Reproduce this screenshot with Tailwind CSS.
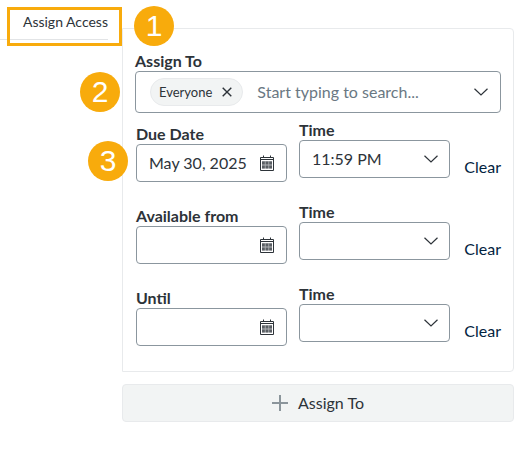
<!DOCTYPE html>
<html lang="en">
<head>
  <meta charset="UTF-8" />
  <meta name="viewport" content="width=device-width, initial-scale=1.0"/>
  <title>Assign Access</title>
  <script src="https://cdn.jsdelivr.net/npm/@tailwindcss/browser@4"></script>
</head>
<body class="relative bg-white font-[Lato,sans-serif] text-base leading-5 text-[#2d3339]">

  <!-- Shared icons -->
  <svg class="hidden">
    <symbol id="chevron" viewBox="0 0 14 8">
      <path d="M0.5 0.7 L7 7 L13.5 0.7" fill="none" stroke="#2d3339" stroke-width="1.2"/>
    </symbol>
    <symbol id="calendar" viewBox="0 0 14 16">
      <path d="M0.5 2.5H13.5V15.5H0.5Z M0.5 4.5H13.5" fill="none" stroke="#2d3339"/>
      <path d="M3.5 0.5V3 M10.5 0.5V3" stroke="#2d3339"/>
      <path d="M2 6H12V13.5H2Z" fill="#b4b7ba"/>
      <path d="M2 6.5h2.8v3H2z M5.6 6.5h2.8v3H5.6z M9.2 6.5H12v3H9.2z M2 10.5h2.8v3H2z M5.6 10.5h2.8v3H5.6z M9.2 10.5H12v3H9.2z" fill="#5a5f64"/>
    </symbol>
  </svg>

  <div class="flex items-start">
    <div class="w-[108px] shrink-0 border-b border-[#e2e4e6] pt-3 pb-[7px] text-right text-sm leading-5">Assign Access</div>

    <main class="ml-[14px] mr-[18px] min-w-0 flex-1 pt-7">
      <form class="rounded-r-sm border border-[#e8eaec] px-3 pt-[22px] pb-[25px]">
        <label for="assignee" class="block font-bold">Assign To</label>
        <div class="flex h-[42px] items-center rounded-[4px] border border-[#8b969e] pr-3 pl-[14px]">
          <span class="flex h-7 items-center gap-2 rounded-full border border-[#e8eaec] bg-[#f2f4f4] pr-2 pl-2 text-[13px] leading-5">
            Everyone
            <button type="button" aria-label="Remove Everyone" class="p-0.5">
              <svg class="size-[10px]" viewBox="0 0 10 10"><path d="M0.7 0.7L9.3 9.3M9.3 0.7L0.7 9.3" stroke="#2d3339" stroke-width="1.4"/></svg>
            </button>
          </span>
          <input id="assignee" type="text" placeholder="Start typing to search..." class="ml-[14px] min-w-0 flex-1 outline-none placeholder:text-[#6a7883]" />
          <svg class="h-2 w-[14px] shrink-0"><use href="#chevron"/></svg>
        </div>

        <div class="mt-[7px] space-y-5 pl-px">
          <div class="grid grid-cols-[minmax(0,1fr)_minmax(0,1fr)_39px] gap-x-3">
            <div class="pt-1">
              <label for="dueDate" class="block font-bold">Due Date</label>
              <div class="flex h-[38px] items-center rounded-[4px] border border-[#8b969e] px-3">
                <input id="dueDate" type="text" value="May 30, 2025" class="min-w-0 flex-1 outline-none" />
                <button type="button" aria-label="Pick due date"><svg class="h-4 w-[14px]"><use href="#calendar"/></svg></button>
              </div>
            </div>
            <div>
              <label for="dueTime" class="block font-bold">Time</label>
              <div class="grid items-center">
                <select id="dueTime" class="col-start-1 row-start-1 h-[38px] w-full appearance-none rounded-[4px] border border-[#8b969e] px-3">
                  <option>11:59 PM</option>
                </select>
                <svg class="pointer-events-none col-start-1 row-start-1 mr-3 h-2 w-[14px] justify-self-end"><use href="#chevron"/></svg>
              </div>
            </div>
            <button type="button" class="self-end pb-[5px] text-right text-[#03233f]">Clear</button>
          </div>

          <div class="grid grid-cols-[minmax(0,1fr)_minmax(0,1fr)_39px] gap-x-3">
            <div class="pt-1">
              <label for="fromDate" class="block font-bold">Available from</label>
              <div class="flex h-[38px] items-center rounded-[4px] border border-[#8b969e] px-3">
                <input id="fromDate" type="text" class="min-w-0 flex-1 outline-none" />
                <button type="button" aria-label="Pick available from date"><svg class="h-4 w-[14px]"><use href="#calendar"/></svg></button>
              </div>
            </div>
            <div>
              <label for="fromTime" class="block font-bold">Time</label>
              <div class="grid items-center">
                <select id="fromTime" class="col-start-1 row-start-1 h-[38px] w-full appearance-none rounded-[4px] border border-[#8b969e] px-3">
                  <option></option>
                </select>
                <svg class="pointer-events-none col-start-1 row-start-1 mr-3 h-2 w-[14px] justify-self-end"><use href="#chevron"/></svg>
              </div>
            </div>
            <button type="button" class="self-end pb-[5px] text-right text-[#03233f]">Clear</button>
          </div>

          <div class="grid grid-cols-[minmax(0,1fr)_minmax(0,1fr)_39px] gap-x-3">
            <div class="pt-1">
              <label for="untilDate" class="block font-bold">Until</label>
              <div class="flex h-[38px] items-center rounded-[4px] border border-[#8b969e] px-3">
                <input id="untilDate" type="text" class="min-w-0 flex-1 outline-none" />
                <button type="button" aria-label="Pick until date"><svg class="h-4 w-[14px]"><use href="#calendar"/></svg></button>
              </div>
            </div>
            <div>
              <label for="untilTime" class="block font-bold">Time</label>
              <div class="grid items-center">
                <select id="untilTime" class="col-start-1 row-start-1 h-[38px] w-full appearance-none rounded-[4px] border border-[#8b969e] px-3">
                  <option></option>
                </select>
                <svg class="pointer-events-none col-start-1 row-start-1 mr-3 h-2 w-[14px] justify-self-end"><use href="#chevron"/></svg>
              </div>
            </div>
            <button type="button" class="self-end pb-[5px] text-right text-[#03233f]">Clear</button>
          </div>
        </div>
      </form>

      <button type="button" class="mt-3 flex h-[38px] w-full items-center justify-center gap-[10px] rounded-[4px] border border-[#e8eaec] bg-[#f2f4f4]">
        <svg class="size-4" viewBox="0 0 16 16"><path d="M8 0V16M0 8H16" stroke="#8b959b" stroke-width="2"/></svg>
        Assign To
      </button>
    </main>
  </div>

  <!-- Step callouts -->
  <div class="pointer-events-none absolute top-[7px] left-[7px] h-[39px] w-[115px] border-3 border-[#f8ab0c]"></div>
  <div class="absolute top-[6px] left-[134px] flex size-10 items-center justify-center rounded-full bg-[#f8ab0c] font-[Liberation_Sans,sans-serif] text-[30px] text-white">1</div>
  <div class="absolute top-[72px] left-[80px] flex size-10 items-center justify-center rounded-full bg-[#f8ab0c] font-[Liberation_Sans,sans-serif] text-[30px] text-white">2</div>
  <div class="absolute top-[141px] left-[88px] flex size-10 items-center justify-center rounded-full bg-[#f8ab0c] font-[Liberation_Sans,sans-serif] text-[30px] text-white">3</div>

</body>
</html>
